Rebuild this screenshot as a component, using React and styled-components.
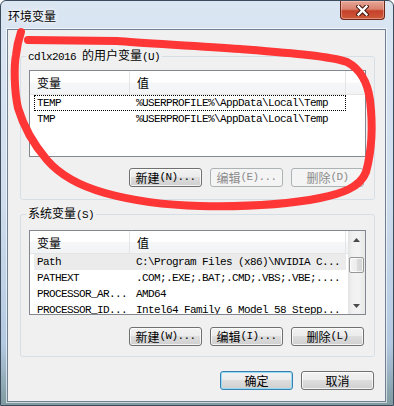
import styled, { createGlobalStyle } from "styled-components";

const CJK = `"Noto Sans CJK SC", "Noto Sans", sans-serif`;
const MONO = `"Liberation Mono", "Noto Sans CJK SC", monospace`;

const GlobalStyle = createGlobalStyle`
  html, body { margin: 0; padding: 0; background: #fff; }
  body { font-family: ${CJK}; font-size: 12px; color: #000; }
`;

const userVars = [
  { name: "TEMP", value: "%USERPROFILE%\\AppData\\Local\\Temp", focus: true },
  { name: "TMP", value: "%USERPROFILE%\\AppData\\Local\\Temp" },
];

const sysVars = [
  { name: "Path", value: "C:\\Program Files (x86)\\NVIDIA C...", selected: true },
  { name: "PATHEXT", value: ".COM;.EXE;.BAT;.CMD;.VBS;.VBE;...." },
  { name: "PROCESSOR_AR...", value: "AMD64" },
  { name: "PROCESSOR_ID...", value: "Intel64 Family 6 Model 58 Stepp..." },
];

export default function App() {
  return (
    <>
      <GlobalStyle />
      <Win>
        <TitleBar>
          <Title>环境变量</Title>
          <CloseBtn>
            <svg width="13" height="11" viewBox="0 0 13 11">
              <path d="M2.5 1.5 L10.5 9.5 M10.5 1.5 L2.5 9.5" stroke="#40150c" strokeWidth="4.4" strokeLinecap="square" />
              <path d="M2.5 1.5 L10.5 9.5 M10.5 1.5 L2.5 9.5" stroke="#ffffff" strokeWidth="2.4" strokeLinecap="square" />
            </svg>
          </CloseBtn>
        </TitleBar>

        <Client>
          <Group $pt={6} $pb={12}>
            <Legend>
              <Latin>cdlx2016 </Latin>的用户变量<Latin>(U)</Latin>
            </Legend>
            <List $h={87}>
              <ListMain>
                <Header $h={24}>
                  <HeadCell>变量</HeadCell>
                  <HeadCell>值</HeadCell>
                  <HeadCell $last />
                </Header>
                {userVars.map((v) => (
                  <Row key={v.name} $focus={v.focus}>
                    <Cell>{v.name}</Cell>
                    <Cell $value>{v.value}</Cell>
                  </Row>
                ))}
              </ListMain>
            </List>
            <ButtonRow $mt={11}>
              <Button>新建<Latin>(N)...</Latin></Button>
              <Button disabled>编辑<Latin>(E)...</Latin></Button>
              <Button disabled>删除<Latin>(D)</Latin></Button>
            </ButtonRow>
          </Group>

          <Group $pt={8} $pb={10} style={{ marginTop: 6 }}>
            <Legend>
              系统变量<Latin>(S)</Latin>
            </Legend>
            <List $h={85} $scroll>
              <ListMain>
                <Header $h={23}>
                  <HeadCell>变量</HeadCell>
                  <HeadCell>值</HeadCell>
                  <HeadCell $last />
                </Header>
                {sysVars.map((v) => (
                  <Row key={v.name} $selected={v.selected}>
                    <Cell>{v.name}</Cell>
                    <Cell $value>{v.value}</Cell>
                  </Row>
                ))}
              </ListMain>
              <ScrollBar>
                <ArrowBtn>
                  <svg width="7" height="4" viewBox="0 0 7 4"><polygon points="0,4 7,4 3.5,0" fill="#4a4a4a" /></svg>
                </ArrowBtn>
                <Track>
                  <Thumb />
                </Track>
                <ArrowBtn>
                  <svg width="7" height="4" viewBox="0 0 7 4"><polygon points="0,0 7,0 3.5,4" fill="#4a4a4a" /></svg>
                </ArrowBtn>
              </ScrollBar>
            </List>
            <ButtonRow $mt={12}>
              <Button>新建<Latin>(W)...</Latin></Button>
              <Button>编辑<Latin>(I)...</Latin></Button>
              <Button>删除<Latin>(L)</Latin></Button>
            </ButtonRow>
          </Group>

          <Footer>
            <Button $default>确定</Button>
            <Button>取消</Button>
          </Footer>
        </Client>

        <Scribble width="394" height="406" viewBox="0 0 394 406">
          <path
            d="M28 40 L117 41 C140 43, 200 46, 240 49 C290 53, 330 56, 347 62 C362 70, 368 85, 370 100 C373 125, 372 150, 366 172 C360 188, 340 194, 320 198 C290 204, 250 207, 200 206 C160 205, 130 200, 105 193 C80 186, 60 175, 47 160 C35 146, 24 128, 18 108 C14 90, 14 65, 16 55 C17 45, 19 38, 21 32"
            fill="none"
            stroke="#ff3636"
            strokeWidth="8"
            strokeLinecap="round"
            strokeLinejoin="round"
          />
        </Scribble>
      </Win>
    </>
  );
}

const Win = styled.div`
  position: relative;
  width: 394px;
  height: 406px;
  box-sizing: border-box;
  border: 1px solid #3d4c5c;
  border-radius: 6px 6px 0 0;
  background: linear-gradient(180deg, #dbe6f3 0%, #cfdded 50%, #b3c9e1 85%, #7f9aa0 100%);
  display: flex;
  flex-direction: column;
  overflow: hidden;
`;

const TitleBar = styled.div`
  height: 28px;
  flex: none;
  display: flex;
  align-items: center;
  justify-content: space-between;
  padding: 0 8px 0 7px;
`;

const Title = styled.div`
  font: 12px/16px ${CJK};
  color: #000;
  text-shadow: 0 0 6px #ffffff, 0 0 3px #ffffff;
  margin-top: 1px;
`;

const CloseBtn = styled.div`
  align-self: flex-start;
  width: 45px;
  height: 19px;
  box-sizing: border-box;
  border: 1px solid #6b2519;
  border-top: none;
  border-radius: 0 0 4px 4px;
  background: linear-gradient(180deg, #e6a697 0%, #d9826f 45%, #c5412a 55%, #cf5a3a 100%);
  box-shadow: inset 0 0 0 1px rgba(255, 210, 200, 0.45);
  display: flex;
  align-items: center;
  justify-content: center;
`;

const Client = styled.div`
  flex: 1;
  margin: 0 7px 7px 6px;
  border: 1px solid #6f8092;
  box-shadow: 0 0 0 1px rgba(255, 255, 255, 0.6);
  background: #f0f0f0;
  padding: 18px 11px 11px 12px;
  display: flex;
  flex-direction: column;
`;

const Group = styled.fieldset`
  width: 355px;
  min-width: 0;
  box-sizing: border-box;
  margin: 0;
  padding: ${(p) => p.$pt}px 8px ${(p) => p.$pb}px 8px;
  border: 1px solid #d5dfe5;
  border-radius: 3px;
`;

const Legend = styled.legend`
  padding: 0 2px;
  margin-left: -3px;
  font: 12px/14px ${CJK};
  color: #000;
`;

const Latin = styled.span`
  font-family: ${MONO};
  font-size: 11px;
  letter-spacing: -0.6px;
`;

const List = styled.div`
  height: ${(p) => p.$h}px;
  box-sizing: border-box;
  border: 1px solid #828790;
  background: #fff;
  display: grid;
  grid-template-columns: ${(p) => (p.$scroll ? "1fr 17px" : "1fr")};
  overflow: hidden;
`;

const ListMain = styled.div`
  overflow: hidden;
`;

const Header = styled.div`
  height: ${(p) => p.$h}px;
  box-sizing: border-box;
  display: grid;
  grid-template-columns: 100px 216px 1fr;
  border-bottom: 1px solid #e5e5e5;
  background: linear-gradient(180deg, #ffffff 0%, #ffffff 48%, #f6f7f8 52%, #f2f3f5 100%);
`;

const HeadCell = styled.div`
  box-sizing: border-box;
  padding: 1px 0 0 7px;
  border-right: ${(p) => (p.$last ? "none" : "1px solid #e3e5e8")};
  font: 12px/22px ${CJK};
  color: #000;
`;

const Row = styled.div`
  margin-left: 4px;
  width: 312px;
  height: 16px;
  box-sizing: border-box;
  border: 1px ${(p) => (p.$focus ? "dotted #000" : "solid transparent")};
  background: ${(p) => (p.$selected ? "#ebebeb" : "transparent")};
  display: grid;
  grid-template-columns: 95px 1fr;
  align-items: center;
`;

const Cell = styled.div`
  padding-left: ${(p) => (p.$value ? 6 : 2)}px;
  white-space: nowrap;
  overflow: hidden;
  font-family: ${MONO};
  font-size: 11px;
  letter-spacing: -0.6px;
  line-height: 14px;
  color: #000;
`;

const ScrollBar = styled.div`
  display: flex;
  flex-direction: column;
  background: linear-gradient(90deg, #e3e3e3 0%, #f0f0f0 25%, #f3f3f3 60%, #e8e8e8 100%);
`;

const ArrowBtn = styled.div`
  height: 17px;
  flex: none;
  display: flex;
  align-items: center;
  justify-content: center;
`;

const Track = styled.div`
  flex: 1;
  padding-top: 9px;
`;

const Thumb = styled.div`
  margin: 0 1px;
  height: 16px;
  box-sizing: border-box;
  border: 1px solid #979797;
  border-radius: 2px;
  background: linear-gradient(90deg, #f4f4f4 0%, #ececec 50%, #dcdcdc 50%, #d4d4d4 100%);
  box-shadow: inset 0 0 0 1px rgba(255, 255, 255, 0.7);
`;

const ButtonRow = styled.div`
  margin-top: ${(p) => p.$mt}px;
  padding-right: 2px;
  display: flex;
  justify-content: flex-end;
  gap: 8px;
`;

const Footer = styled.div`
  margin-top: 14px;
  display: flex;
  justify-content: flex-end;
  gap: 8px;
`;

const Button = styled.button`
  width: 73px;
  height: 19px;
  box-sizing: border-box;
  margin: 0;
  padding: 0;
  border: 1px solid ${(p) => (p.$default ? "#3c7fb1" : p.disabled ? "#adb2b5" : "#707070")};
  border-radius: 3px;
  background: ${(p) =>
    p.disabled ? "#f4f4f4" : "linear-gradient(180deg, #f2f2f2 0%, #ebebeb 50%, #dddddd 50%, #cfcfcf 100%)"};
  box-shadow: inset 0 0 0 1px
    ${(p) => (p.$default ? "#93dcf6" : p.disabled ? "#f4f4f4" : "rgba(255, 255, 255, 0.75)")};
  color: ${(p) => (p.disabled ? "#8b8b8b" : "#000")};
  font: 12px/17px ${CJK};
  display: flex;
  align-items: center;
  justify-content: center;
`;

const Scribble = styled.svg`
  position: absolute;
  left: -1px;
  top: -1px;
  pointer-events: none;
`;
